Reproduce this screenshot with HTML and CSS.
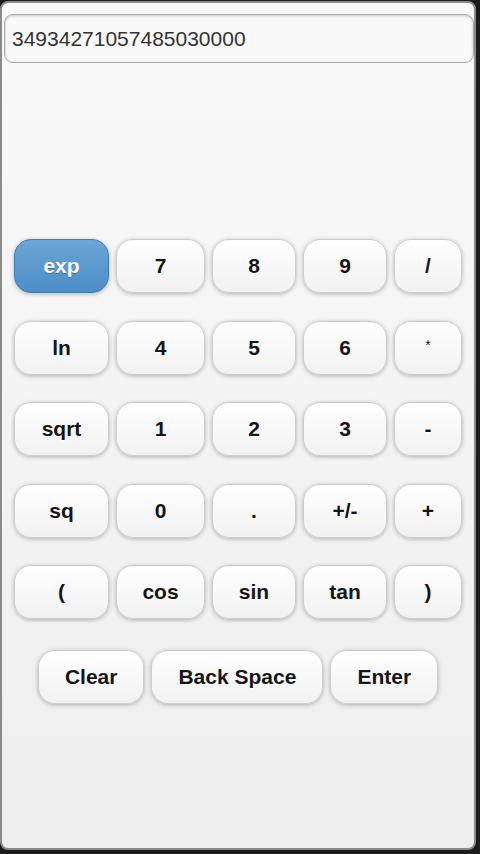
FILE: index.html
```html
<!DOCTYPE html>
<html>
<head>
<meta charset="utf-8">
<link rel="stylesheet" href="styles.css">
</head>
<body>
<div class="panel">
  <div class="display">34934271057485030000</div>
  <div class="keys">
    <div class="btn active">exp</div>
    <div class="btn">7</div>
    <div class="btn">8</div>
    <div class="btn">9</div>
    <div class="btn">/</div>
    <div class="btn">ln</div>
    <div class="btn">4</div>
    <div class="btn">5</div>
    <div class="btn">6</div>
    <div class="btn small">*</div>
    <div class="btn">sqrt</div>
    <div class="btn">1</div>
    <div class="btn">2</div>
    <div class="btn">3</div>
    <div class="btn">-</div>
    <div class="btn">sq</div>
    <div class="btn">0</div>
    <div class="btn">.</div>
    <div class="btn">+/-</div>
    <div class="btn">+</div>
    <div class="btn">(</div>
    <div class="btn">cos</div>
    <div class="btn">sin</div>
    <div class="btn">tan</div>
    <div class="btn">)</div>
  </div>
  <div class="actions">
    <div class="btn wide">Clear</div>
    <div class="btn wide">Back Space</div>
    <div class="btn wide">Enter</div>
  </div>
</div>
</body>
</html>
```

FILE: styles.css
```css
html, body {
  margin: 0;
  padding: 0;
  background: #1c1c1c;
  width: 480px;
  height: 854px;
  overflow: hidden;
}
.panel {
  box-sizing: border-box;
  width: 476px;
  height: 849px;
  margin-top: 1px;
  border: 2px solid #8a8a8a;
  border-radius: 8px;
  background: linear-gradient(#f9f9f9, #eeeeee);
  display: flex;
  flex-direction: column;
  font-family: "Liberation Sans", Arial, sans-serif;
}
.display {
  box-sizing: border-box;
  width: 470px;
  height: 49px;
  margin: 11px 0 0 2px;
  border: 1px solid #a9a9a9;
  border-radius: 9px;
  background: #f9f9f9;
  box-shadow: inset 0 1px 3px rgba(0,0,0,0.2);
  font-size: 21px;
  color: #333;
  line-height: 47px;
  padding-left: 7px;
}
.keys {
  display: grid;
  grid-template-columns: 95px 89px 84px 84px 68px;
  grid-auto-rows: 54px;
  column-gap: 7px;
  row-gap: 27.5px;
  margin: 176px 0 0 12px;
}
.btn {
  box-sizing: border-box;
  display: flex;
  align-items: center;
  justify-content: center;
  border: 1px solid #cccccc;
  border-radius: 17px;
  background: linear-gradient(#ffffff, #f1f1f1);
  box-shadow: 0 1px 4px rgba(0,0,0,0.28);
  font-weight: bold;
  font-size: 21px;
  color: #151515;
  text-shadow: 0 1px 0 #fff;
}
.btn.small {
  font-size: 14px;
  font-weight: normal;
  padding-bottom: 6px;
}
.btn.active {
  background: linear-gradient(#6aa6d6, #4d8dc6);
  border-color: #3f7fb6;
  color: #fff;
  text-shadow: 0 1px 0 #3a74a8;
}
.actions {
  display: flex;
  justify-content: center;
  gap: 7px;
  margin-top: 31px;
}
.btn.wide {
  height: 54px;
  padding: 0 26px;
}
```
